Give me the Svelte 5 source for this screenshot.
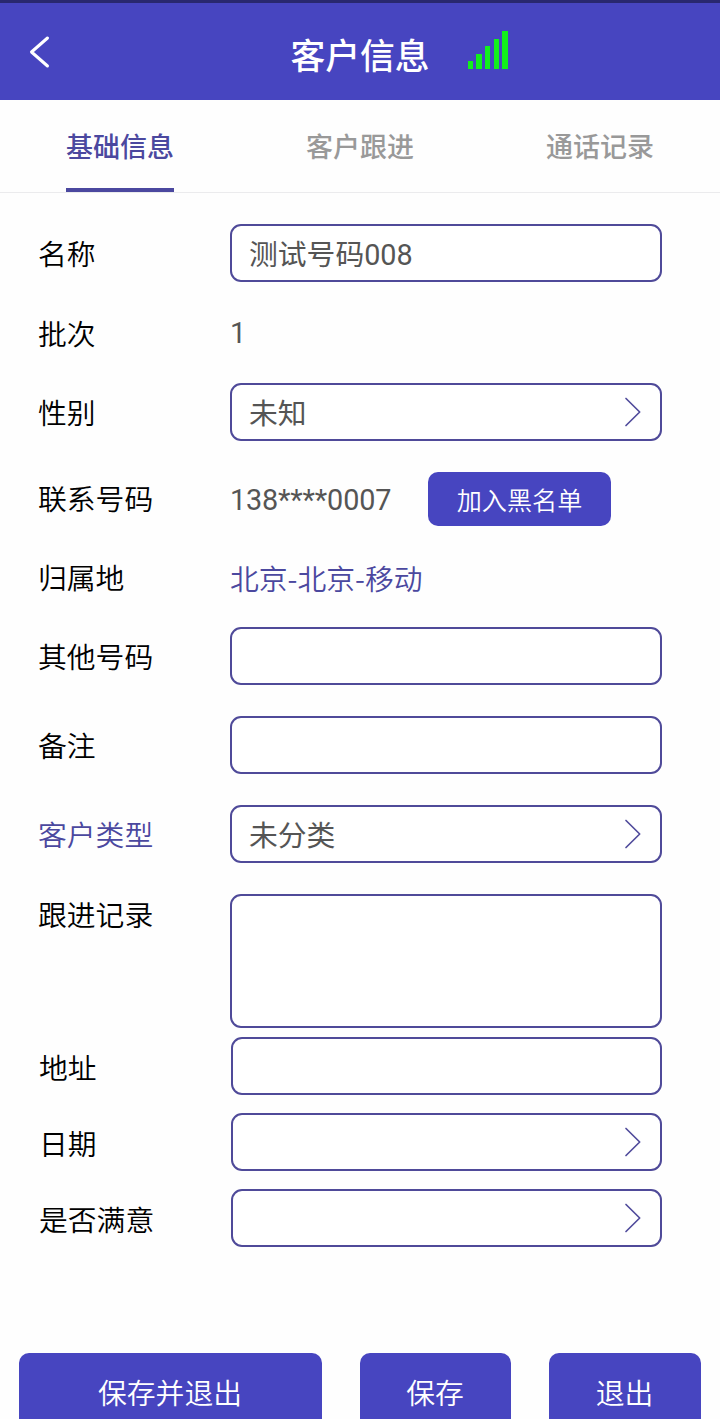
<script lang="ts">
	type Field = {
		key: string;
		label: string;
		kind: 'input' | 'select' | 'text' | 'phone' | 'area';
		accent?: boolean;
	};

	const tabs = ['基础信息', '客户跟进', '通话记录'];

	const fields: Field[] = [
		{ key: 'name', label: '名称', kind: 'input' },
		{ key: 'batch', label: '批次', kind: 'text' },
		{ key: 'gender', label: '性别', kind: 'select' },
		{ key: 'phone', label: '联系号码', kind: 'phone' },
		{ key: 'region', label: '归属地', kind: 'text', accent: true },
		{ key: 'otherPhone', label: '其他号码', kind: 'input' },
		{ key: 'remark', label: '备注', kind: 'input' },
		{ key: 'type', label: '客户类型', kind: 'select' },
		{ key: 'record', label: '跟进记录', kind: 'area' }
	];

	// fields configured per customer template
	const customFields: Field[] = [
		{ key: 'address', label: '地址', kind: 'input' },
		{ key: 'date', label: '日期', kind: 'select' },
		{ key: 'satisfied', label: '是否满意', kind: 'select' }
	];

	const signal = [8, 15, 23, 30, 38];

	let active = $state(0);
	let values: Record<string, string> = $state({
		name: '测试号码008',
		batch: '1',
		gender: '未知',
		phone: '138****0007',
		region: '北京-北京-移动',
		otherPhone: '',
		remark: '',
		type: '未分类',
		record: '',
		address: '',
		date: '',
		satisfied: ''
	});
</script>

{#snippet row(f: Field)}
	<div class="row {f.kind}">
		<span class="label" class:accent={f.key === 'type'}>{f.label}</span>
		{#if f.kind === 'input'}
			<input class="box" type="text" aria-label={f.label} bind:value={values[f.key]} />
		{:else if f.kind === 'area'}
			<textarea class="box" aria-label={f.label} bind:value={values[f.key]}></textarea>
		{:else if f.kind === 'select'}
			<button class="box picker" aria-label={f.label}>
				<span>{values[f.key]}</span>
				<svg width="18" height="32" viewBox="0 0 18 32">
					<path d="M2 2.5 15.7 16 2 29.5" />
				</svg>
			</button>
		{:else}
			<span class="value" class:accent={f.accent}>{values[f.key]}</span>
			{#if f.kind === 'phone'}
				<button class="blacklist">加入黑名单</button>
			{/if}
		{/if}
	</div>
{/snippet}

<div class="page">
	<header>
		<button class="back" aria-label="返回">
			<svg width="24" height="36" viewBox="0 0 24 36">
				<path d="M20.5 4 4.5 18 20.5 32" />
			</svg>
		</button>
		<h1>客户信息</h1>
		<div class="signal">
			{#each signal as h}
				<i style="height: {h}px"></i>
			{/each}
		</div>
	</header>

	<nav>
		{#each tabs as tab, i}
			<button class="tab" class:active={active === i} onclick={() => (active = i)}>
				<span>{tab}</span>
			</button>
		{/each}
	</nav>

	<main>
		{#each fields as f (f.key)}
			{@render row(f)}
		{/each}
		<div class="custom">
			{#each customFields as f (f.key)}
				{@render row(f)}
			{/each}
		</div>
	</main>

	<footer>
		<button>保存并退出</button>
		<button>保存</button>
		<button>退出</button>
	</footer>
</div>

<style>
	:global(body) {
		margin: 0;
		overflow: hidden;
		background: #fff;
	}

	.page {
		display: flex;
		flex-direction: column;
		box-sizing: border-box;
		height: 1419px;
		overflow: hidden;
		background: #fefefe;
		font-family: Roboto, 'Noto Sans CJK SC', sans-serif;
		font-size: 28.8px;
		font-weight: 350;
		color: #000;
	}

	button, input, textarea {
		margin: 0;
		padding: 0;
		border: 0;
		background: none;
		font: inherit;
		color: inherit;
		outline: none;
	}

	svg {
		display: block;
		fill: none;
		stroke-linecap: round;
		stroke-linejoin: round;
	}

	header {
		display: grid;
		grid-template-columns: 1fr auto 1fr;
		align-items: center;
		flex: none;
		box-sizing: border-box;
		height: 100px;
		border-top: 3px solid #29286f;
		background: #4745c0;
		color: #fff;
	}

	.back {
		justify-self: start;
		padding: 0 0 0 27px;
	}
	.back svg { stroke: #fff; stroke-width: 3; }

	h1 {
		margin: 10px 0 0;
		font-size: 34.8px;
		line-height: 48px;
		font-weight: 500;
	}

	.signal {
		display: flex;
		align-items: flex-end;
		gap: 3.4px;
		margin: 0 0 3px 38px;
	}
	.signal i {
		width: 5.3px;
		background: #12f01c;
	}

	nav {
		display: flex;
		flex: none;
		height: 92px;
		border-bottom: 1px solid #ebebed;
	}

	.tab {
		display: flex;
		flex: 1;
		justify-content: center;
		font-size: 27px;
		font-weight: 500;
		color: #999;
	}
	.tab span {
		box-sizing: border-box;
		height: 92px;
		padding-top: 2px;
		line-height: 92px;
		border-bottom: 4px solid transparent;
	}
	.tab.active { color: #4b489f; }
	.tab.active span { border-color: #4b489f; }

	main {
		display: flex;
		flex-direction: column;
		flex: none;
		gap: 31px;
		padding: 31px 58px 0 38px;
	}

	.row {
		display: flex;
		align-items: center;
		height: 58px;
	}
	.row.text { height: 39px; }
	.row.phone { height: 54px; }
	.row.area {
		height: 134px;
		align-items: flex-start;
	}

	.label {
		flex: none;
		width: 192px;
		padding-top: 4px;
		line-height: 40px;
	}
	.area .label { padding-top: 2px; }
	.phone .label { padding-top: 2px; }
	.custom .label { padding-top: 6px; }

	.accent, .value.accent { color: #4b489f; }
	.value {
		padding-top: 1px;
		color: #555;
		font-weight: 380;
	}
	.phone .value { letter-spacing: -0.15px; }
	.value.accent {
		font-family: 'Noto Sans CJK SC', sans-serif;
		font-weight: 350;
	}

	.box {
		display: block;
		box-sizing: border-box;
		flex: 1;
		min-width: 0;
		height: 100%;
		padding: 0 17px 1px;
		border: 2px solid #4f4a99;
		border-radius: 11px;
		background: #fff;
		color: #555;
		font-weight: 380;
		resize: none;
	}

	.picker {
		display: flex;
		align-items: center;
		justify-content: space-between;
		padding: 0 18px 0 17px;
		text-align: left;
	}
	.picker span { padding-bottom: 1px; }
	.picker svg { stroke: #514c9c; stroke-width: 1.7; }

	.blacklist {
		width: 183px;
		height: 54px;
		margin-left: auto;
		margin-right: 51px;
		border-radius: 10px;
		background: #4745c0;
		font-size: 25.1px;
		color: #fff;
	}

	.custom {
		display: flex;
		flex-direction: column;
		gap: 18px;
		margin-top: -22px;
		padding-left: 1px;
	}

	footer {
		display: grid;
		grid-template-columns: 303px 151px 152px;
		flex: none;
		gap: 38px;
		margin-top: 106px;
		padding: 0 19px;
	}
	footer button {
		height: 80px;
		padding: 0 1px 4px 0;
		border-radius: 10px;
		background: #4745c0;
		color: #fff;
	}
</style>
